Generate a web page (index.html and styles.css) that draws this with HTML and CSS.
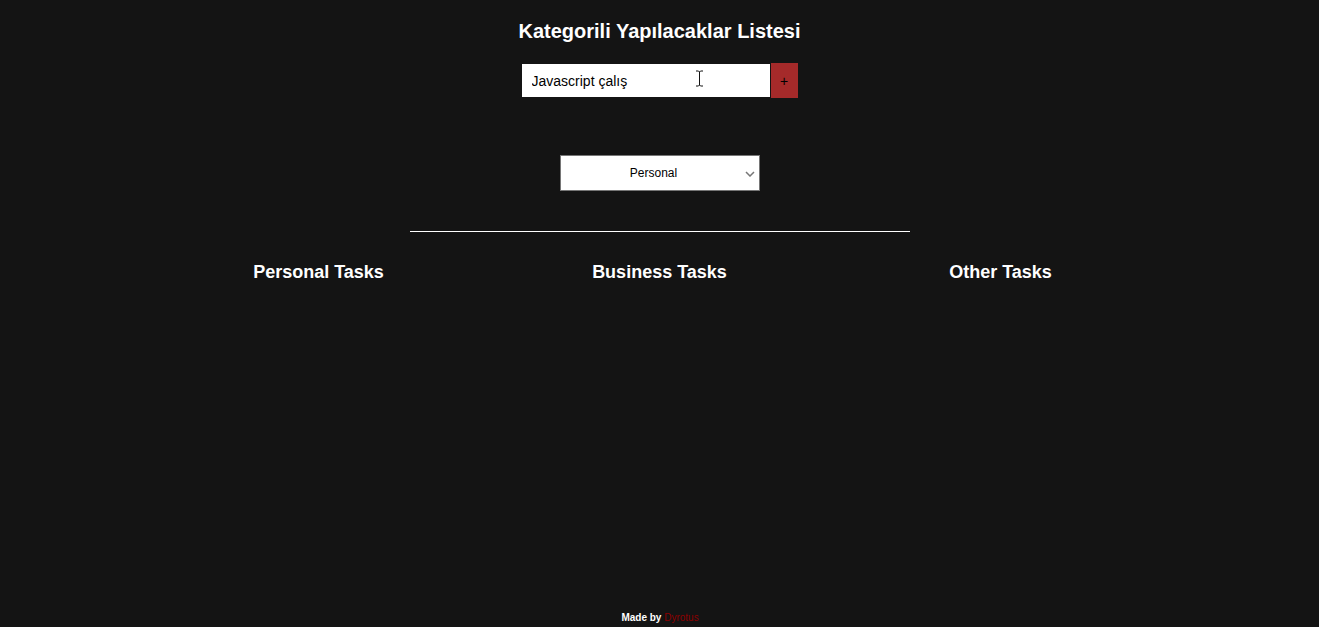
FILE: index.html
```html
<!DOCTYPE html>
<html lang="tr">
<head>
<meta charset="utf-8">
<title>Kategorili Yapılacaklar Listesi</title>
<link rel="stylesheet" href="styles.css">
</head>
<body>
<div class="page">
  <h1 class="title">Kategorili Yapılacaklar Listesi</h1>
  <form class="add-form">
    <div class="input-wrap">
      <input class="task-input" type="text" value="Javascript çalış">
      <svg class="ibeam" width="9" height="17" viewBox="0 0 9 17"><path d="M1 1h2.5L4.5 2 5.5 1H8M4.5 2v13M1 16h2.5l1-1 1 1H8" fill="none" stroke="#111" stroke-width="1"/></svg>
    </div>
    <button class="add-btn" type="button">+</button>
  </form>
  <div class="select-row">
    <div class="select-box">
      <span class="select-text">Personal</span>
      <svg class="chev" width="10" height="6" viewBox="0 0 10 6"><path d="M1 1l4 4 4-4" fill="none" stroke="#777" stroke-width="1.5"/></svg>
    </div>
  </div>
  <hr class="divider">
  <div class="columns">
    <h3 class="col-title">Personal Tasks</h3>
    <h3 class="col-title">Business Tasks</h3>
    <h3 class="col-title">Other Tasks</h3>
  </div>
  <footer class="footer">Made by <span class="author">Dyrotus</span></footer>
</div>
</body>
</html>
```

FILE: styles.css
```css
html, body {
  margin: 0;
  padding: 0;
  height: 100%;
  background: #141414;
  font-family: "Liberation Sans", Arial, sans-serif;
}
.page {
  min-height: 627px;
  display: flex;
  flex-direction: column;
  align-items: center;
}
.title {
  color: #fff;
  font-size: 20px;
  font-weight: bold;
  margin: 20px 0 0;
  line-height: 23px;
}
.add-form {
  display: flex;
  align-items: center;
  margin-top: 20px;
}
.input-wrap {
  position: relative;
}
.task-input {
  box-sizing: border-box;
  width: 248px;
  height: 33px;
  border: none;
  outline: none;
  padding: 0 10px;
  font-family: "Liberation Sans", Arial, sans-serif;
  font-size: 14px;
  color: #000;
  background: #fff;
  display: block;
}
.ibeam {
  position: absolute;
  left: 173px;
  top: 6px;
}
.add-btn {
  box-sizing: border-box;
  width: 27px;
  height: 35px;
  margin-left: 1px;
  border: none;
  background: #a52a2a;
  color: #000;
  font-size: 14px;
  font-family: "Liberation Sans", Arial, sans-serif;
  padding: 0;
}
.select-row {
  margin-top: 57px;
}
.select-box {
  box-sizing: border-box;
  width: 200px;
  height: 36px;
  background: #fff;
  border: 1px solid #767676;
  display: flex;
  align-items: center;
  justify-content: center;
  padding-right: 12px;
  position: relative;
}
.select-text {
  font-size: 12px;
  color: #000;
}
.chev {
  position: absolute;
  right: 4px;
  top: 15px;
}
.divider {
  width: 500px;
  border: none;
  border-top: 1px solid #fff;
  margin: 40px 0 0;
  height: 0;
}
.columns {
  display: grid;
  grid-template-columns: repeat(3, 341px);
  margin-top: 30px;
}
.col-title {
  color: #fff;
  text-align: center;
  font-size: 18px;
  font-weight: bold;
  margin: 0;
  line-height: 21px;
}
.footer {
  margin-top: auto;
  padding: 0 0 3px 1px;
  font-size: 10px;
  font-weight: bold;
  color: #fff;
  line-height: 12px;
}
.author {
  color: #8b0000;
  font-weight: normal;
}
```
